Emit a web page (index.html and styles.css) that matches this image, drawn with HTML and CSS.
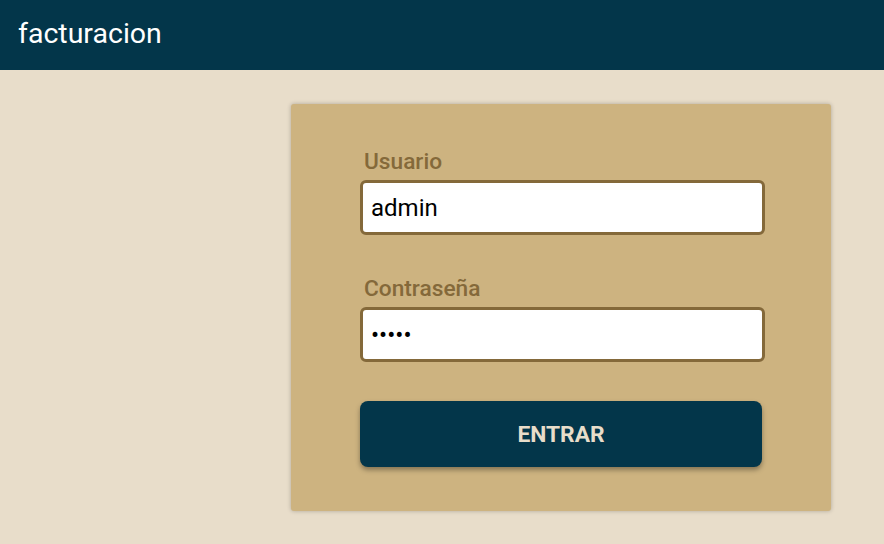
FILE: index.html
```html
<!DOCTYPE html>
<html lang="es">
<head>
<meta charset="utf-8">
<title>facturacion</title>
<link rel="stylesheet" href="styles.css">
</head>
<body>
<header class="topbar">
  <h1 class="brand">facturacion</h1>
</header>
<main class="main">
  <form class="card">
    <div class="field">
      <label class="label" for="u">Usuario</label>
      <input class="input" id="u" type="text" value="admin">
    </div>
    <div class="field field-next">
      <label class="label" for="p">Contraseña</label>
      <input class="input" id="p" type="password" value="admin">
    </div>
    <button class="btn" type="button">ENTRAR</button>
  </form>
</main>
</body>
</html>
```
FILE: styles.css
```css
* { box-sizing: border-box; }
html, body { margin: 0; padding: 0; }
body {
  background: #e8ddca;
  font-family: Roboto, "Liberation Sans", sans-serif;
  height: 544px;
  overflow: hidden;
}
.topbar {
  height: 70px;
  background: #03364a;
  display: flex;
  align-items: center;
  padding-left: 18px;
}
.brand {
  margin: 0;
  color: #ffffff;
  font-weight: 400;
  font-size: 28.5px;
  line-height: 1;
  padding-bottom: 2px;
}
.main {
  padding: 34px 0 0 291px;
}
.card {
  width: 540px;
  height: 407px;
  background: #cdb380;
  border-radius: 3px;
  box-shadow: 0 0 4px rgba(0,0,0,0.25);
  padding: 43px 66px 0 69px;
  display: flex;
  flex-direction: column;
}
.field {
  display: flex;
  flex-direction: column;
}
.field-next {
  margin-top: 39px;
}
.label {
  color: #84693a;
  font-weight: 500;
  font-size: 22.7px;
  line-height: 30px;
  padding-left: 4px;
  margin-bottom: 3px;
}
.input {
  width: 405px;
  height: 55px;
  border: 3px solid #84693a;
  border-radius: 6px;
  background: #fff;
  font-family: Roboto, "Liberation Sans", sans-serif;
  font-size: 24px;
  color: #000;
  padding: 0 8px;
  outline: none;
}
.btn {
  margin-top: 39px;
  width: 402px;
  height: 66px;
  background: #03364a;
  color: #e8ddca;
  border: none;
  border-radius: 8px;
  font-family: Roboto, "Liberation Sans", sans-serif;
  font-weight: 700;
  font-size: 22.8px;
  box-shadow: 0 3px 5px rgba(0,0,0,0.35);
}
```
